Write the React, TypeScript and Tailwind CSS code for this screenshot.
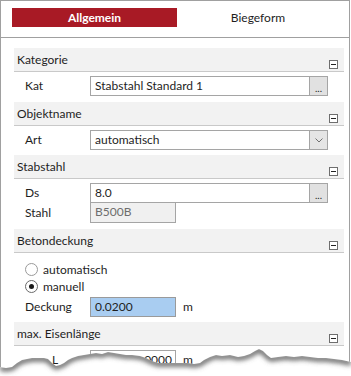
import type { ReactNode } from 'react'

function Minus() {
  return (
    <span className="absolute right-[6px] bottom-[2px] flex h-[9px] w-[9px] items-center justify-center border border-[#6e6e6e] bg-white">
      <span className="h-px w-[5px] bg-[#222]" />
    </span>
  )
}

function Header({ title }: { title: string }) {
  return (
    <div className="relative h-[24px] border-b border-[#c9c9c9] bg-[#f2f2f2] pl-[3px] pt-[4px] leading-[15px]">
      {title}
      <Minus />
    </div>
  )
}

function Row({ label, children, className = '', labelClass = 'pl-[11px]' }: { label: string; children: ReactNode; className?: string; labelClass?: string }) {
  return (
    <div className={`flex items-center ${className}`}>
      <span className={`w-[76px] ${labelClass}`}>{label}</span>
      {children}
    </div>
  )
}

// torn paper edge across the bottom
const path =
  'M0,367 L6,368 L12,367 L17,363 L22,360 L32,358 L44,358 L48,359 L52,363 L56,366 L60,365 L64,363 L68,360 L72,358 L78,356 L84,355 L90,354 L96,353 L102,354 L108,352 L114,353 L120,354 L126,355 L132,355 L140,356 L146,358 L152,361 L158,363 L166,363 L174,363 L180,363 L188,363 L194,364 L200,363 L204,360 L210,357 L216,355 L222,356 L230,355 L238,357 L244,356 L250,354 L255,351 L259,349 L263,351 L267,355 L271,358 L278,357 L286,356 L294,357 L302,356 L310,357 L318,358 L326,358 L334,359 L342,360 L351,362'

export default function App() {
  return (
    <div className="relative h-[376px] w-[351px] overflow-hidden bg-white font-['Segoe_UI',Lato,sans-serif] text-[12px] text-[#1e1e1e]">
      <div className="h-[376px] w-[350px] border-x border-t border-[#a0a0a0]">
        <div className="flex h-[37px] border-b border-[#a0a0a0] pl-[11px] pt-[7px]">
          <div className="flex h-[19px] w-[165px] items-center justify-center bg-[#a81a25] font-bold text-white">Allgemein</div>
          <div className="flex h-[19px] w-[162px] items-center justify-center">Biegeform</div>
        </div>

        <div className="ml-[13px] mr-[5px] pt-[10px]">
          <Header title="Kategorie" />
          <Row label="Kat" className="mt-[4px] mb-[6px]">
            <div className="flex h-[20px] w-[238px]">
              <div className="flex-1 border border-[#a5a5a5] bg-white pl-[4px] leading-[18px]">Stabstahl Standard 1</div>
              <div className="flex w-[18px] items-end justify-center border border-l-0 border-[#a5a5a5] bg-[#e1e1e1] pb-[1px] text-[10px] leading-[12px]">...</div>
            </div>
          </Row>

          <Header title="Objektname" />
          <Row label="Art" className="mt-[4px] mb-[5px]">
            <div className="flex h-[20px] w-[238px]">
              <div className="flex-1 border border-[#a5a5a5] bg-white pl-[4px] leading-[18px]">automatisch</div>
              <div className="flex w-[18px] items-center justify-center border border-l-0 border-[#a5a5a5] bg-[#e5e5e5]">
                <svg width="8" height="5" viewBox="0 0 8 5">
                  <path d="M0.5,0.5 L4,4 L7.5,0.5" fill="none" stroke="#707070" strokeWidth="1" />
                </svg>
              </div>
            </div>
          </Row>

          <Header title="Stabstahl" />
          <Row label="Ds" className="mt-[4px]">
            <div className="flex h-[20px] w-[238px]">
              <div className="flex-1 border border-[#a5a5a5] bg-white pl-[4px] leading-[18px]">8.0</div>
              <div className="flex w-[18px] items-end justify-center border border-l-0 border-[#a5a5a5] bg-[#e1e1e1] pb-[1px] text-[10px] leading-[12px]">...</div>
            </div>
          </Row>
          <Row label="Stahl" className="mt-[-1px] mb-[6px]">
            <div className="h-[21px] w-[86px] border border-[#a5a5a5] bg-[#f0f0f0] pl-[4px] leading-[18px] text-[#6d6d6d]">B500B</div>
          </Row>

          <Header title="Betondeckung" />
          <div className="mt-[8px] flex h-[17px] items-center pl-[11px]">
            <span className="mr-[5px] h-[13px] w-[13px] rounded-full border border-[#9a9a9a] bg-white" />
            automatisch
          </div>
          <div className="flex h-[17px] items-center pl-[11px]">
            <span className="mr-[5px] flex h-[13px] w-[13px] items-center justify-center rounded-full border border-[#6a6a6a] bg-white">
              <span className="h-[5px] w-[5px] rounded-full bg-[#1a1a1a]" />
            </span>
            manuell
          </div>
          <Row label="Deckung" className="mt-[2px] mb-[5px]">
            <div className="h-[20px] w-[86px] border border-[#9a9a9a] bg-[#a9cdf1] pl-[4px] leading-[18px]">0.0200</div>
            <span className="ml-[7px]">m</span>
          </Row>

          <Header title="max. Eisenlänge" />
          <Row label="L" labelClass="pl-[38px]" className="mt-[4px]">
            <div className="h-[20px] w-[86px] border border-[#a5a5a5] bg-white pr-[3px] text-right leading-[18px]">10.0000</div>
            <span className="ml-[7px]">m</span>
          </Row>
        </div>
      </div>

      <svg className="pointer-events-none absolute inset-0" width="351" height="376" viewBox="0 0 351 376">
        <defs>
          <clipPath id="below">
            <path d={`${path} L351,376 L0,376 Z`} />
          </clipPath>
          <filter id="blur" x="-10%" y="-200%" width="120%" height="500%">
            <feGaussianBlur stdDeviation="2.4" />
          </filter>
        </defs>
        <path d={`${path} L351,376 L0,376 Z`} fill="#ffffff" />
        <g clipPath="url(#below)">
          <path d={path} transform="translate(0,1)" fill="none" stroke="#5e5e5e" strokeWidth="5" filter="url(#blur)" />
        </g>
      </svg>
    </div>
  )
}
